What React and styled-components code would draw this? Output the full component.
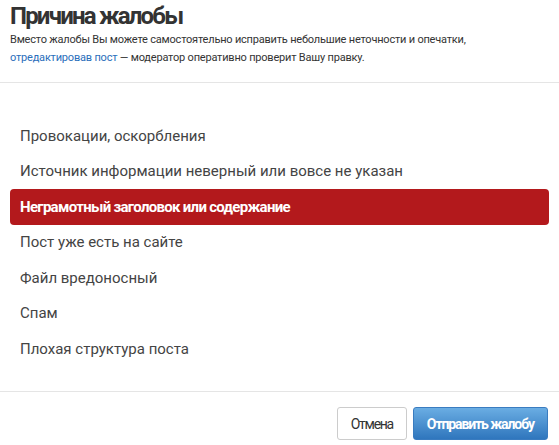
import React, { useState } from "react";
import styled, { createGlobalStyle } from "styled-components";

const GlobalStyle = createGlobalStyle`
   html, body {
      margin: 0;
      padding: 0;
      background: #fff;
   }
   body {
      font-family: Roboto, "Noto Sans", Arial, sans-serif;
      color: #333;
   }
`;

const Dialog = styled.div`
   width: 559px;
   height: 445px;
   display: flex;
   flex-direction: column;
   background: #fff;
   overflow: hidden;
`;

const Header = styled.div`
   padding: 2px 10px 0 10px;
   height: 83px;
   box-sizing: border-box;
   border-bottom: 1px solid #e5e5e5;
`;

const Title = styled.h1`
   margin: 0;
   font-size: 24px;
   line-height: 28px;
   font-weight: 700;
   color: #333;
   letter-spacing: -1.8px;
`;

const Note = styled.p`
   margin: 1px 0 0 0;
   font-size: 11px;
   line-height: 18px;
   color: #333;
   letter-spacing: -0.2px;
`;

const Link = styled.a`
   color: #2a6ebb;
   text-decoration: none;
`;

const List = styled.ul`
   list-style: none;
   margin: 0;
   padding: 35px 10px 0 10px;
   flex: 1;
   border-bottom: 1px solid #e5e5e5;
`;

const Item = styled.li`
   height: 35.5px;
   display: flex;
   align-items: center;
   padding: 0 10px;
   border-radius: 4px;
   font-size: 15px;
   cursor: pointer;
   color: ${(p) => (p.$active ? "#fff" : "#444")};
   background: ${(p) => (p.$active ? "#b3191c" : "transparent")};
   font-weight: ${(p) => (p.$active ? 700 : 400)};
   letter-spacing: ${(p) => (p.$active ? "-0.7px" : "0")};
`;

const Footer = styled.div`
   display: flex;
   justify-content: flex-end;
   gap: 6px;
   padding: 15px 11px 5px 0;
`;

const Button = styled.button`
   height: 33px;
   padding: 0 13px;
   border-radius: 3px;
   font-family: Roboto, Arial, sans-serif;
   font-size: 14px;
   cursor: pointer;
   border: 1px solid ${(p) => (p.$primary ? "#3a7cc0" : "#ccc")};
   color: ${(p) => (p.$primary ? "#fff" : "#333")};
   font-weight: ${(p) => (p.$primary ? 700 : 400)};
   letter-spacing: ${(p) => (p.$primary ? "-1.1px" : "-1.3px")};
   background: ${(p) =>
      p.$primary ? "linear-gradient(#6aade3, #2f76bd)" : "#fff"};
`;

const reasons = [
   "Провокации, оскорбления",
   "Источник информации неверный или вовсе не указан",
   "Неграмотный заголовок или содержание",
   "Пост уже есть на сайте",
   "Файл вредоносный",
   "Спам",
   "Плохая структура поста",
];

export default function App() {
   const [active, setActive] = useState(2);
   return (
      <Dialog>
         <GlobalStyle />
         <Header>
            <Title>Причина жалобы</Title>
            <Note>
               Вместо жалобы Вы можете самостоятельно исправить небольшие
               неточности и опечатки,
               <br />
               <Link href="#">отредактировав пост</Link> — модератор оперативно
               проверит Вашу правку.
            </Note>
         </Header>
         <List>
            {reasons.map((r, i) => (
               <Item key={r} $active={i === active} onClick={() => setActive(i)}>
                  {r}
               </Item>
            ))}
         </List>
         <Footer>
            <Button>Отмена</Button>
            <Button $primary>Отправить жалобу</Button>
         </Footer>
      </Dialog>
   );
}
